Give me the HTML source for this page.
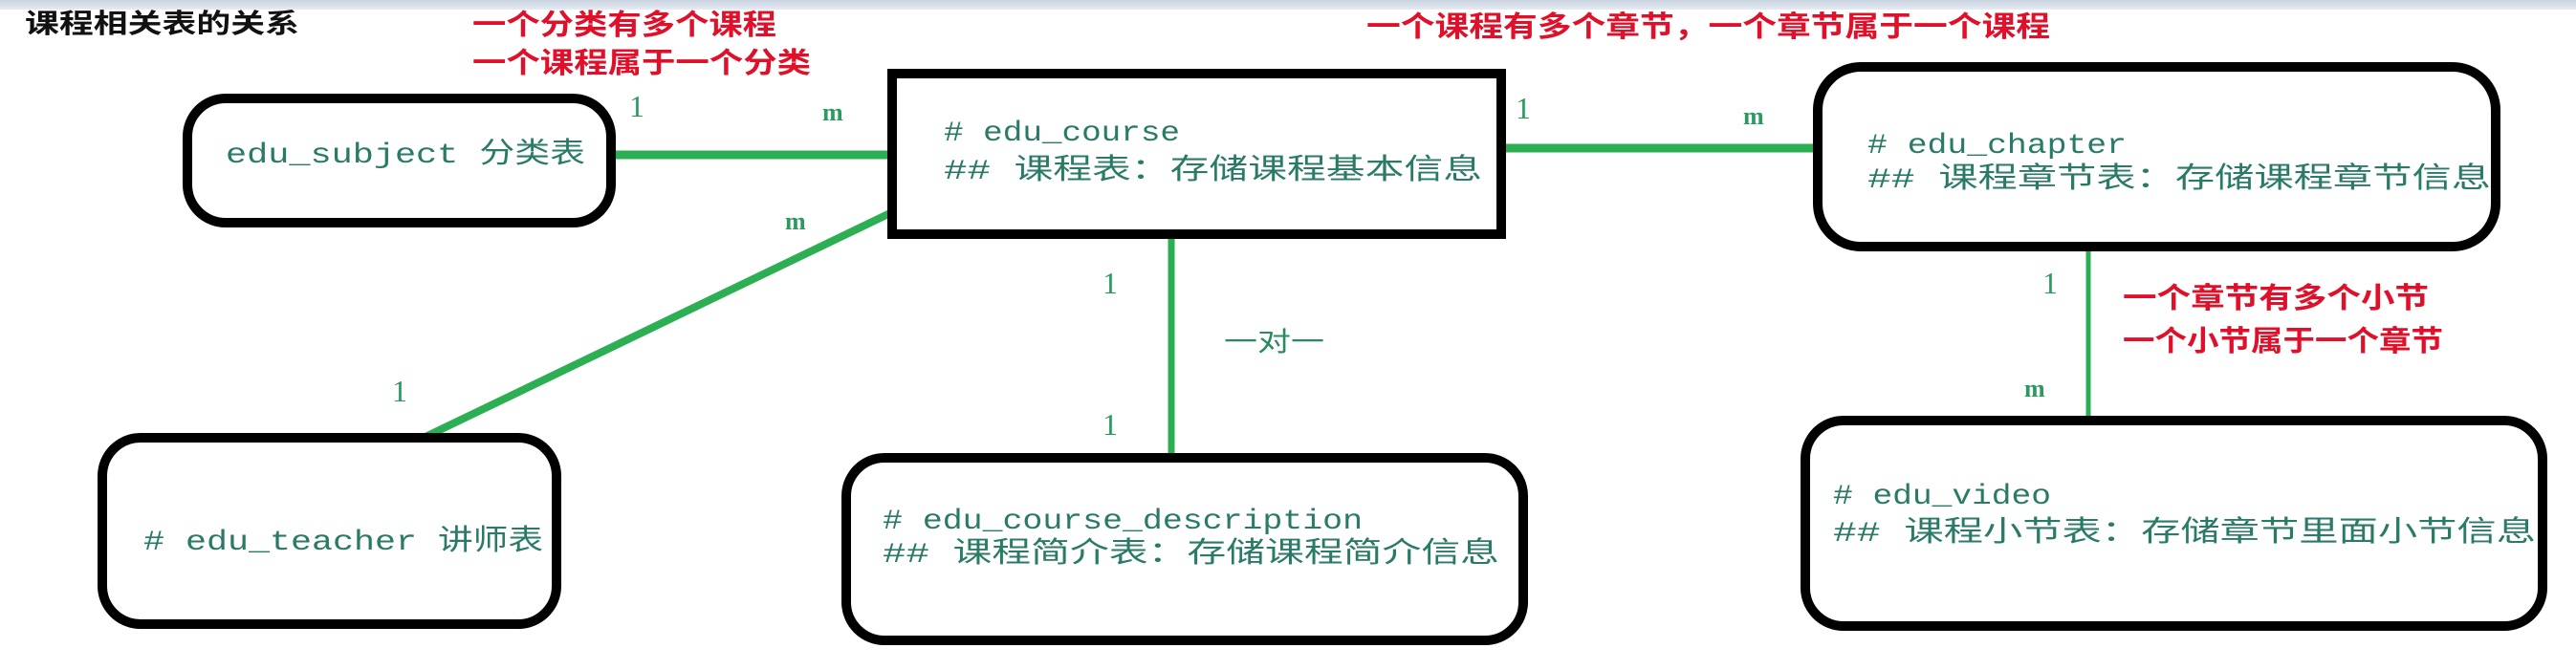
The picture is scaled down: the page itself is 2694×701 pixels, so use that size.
<!DOCTYPE html>
<html><head><meta charset="utf-8"><style>
html,body{margin:0;padding:0;background:#fff;width:2694px;height:701px;overflow:hidden}
svg{display:block}
.t{font-family:"Liberation Mono","Noto Sans CJK SC",monospace;fill:#2a7a68;font-size:30px}
.r{font-family:"Liberation Sans","Noto Sans CJK SC",sans-serif;fill:#e0102a;font-size:30px;font-weight:bold}
.n{font-family:"Liberation Serif",serif;fill:#2a9a5e;font-size:32px}
.m{font-family:"Liberation Serif",serif;fill:#2a9a5e;font-size:26px;font-weight:bold}
</style></head><body>
<svg width="2694" height="701" viewBox="0 0 2694 701" xmlns="http://www.w3.org/2000/svg">
<defs><linearGradient id="g" x1="0" y1="0" x2="0" y2="1"><stop offset="0" stop-color="#c9d3e0"/><stop offset="1" stop-color="#e6ebf2"/></linearGradient></defs>
<rect x="0" y="0" width="2694" height="10" fill="url(#g)"/>
<text x="26" y="34" font-family="Liberation Sans,Noto Sans CJK SC,sans-serif" font-weight="bold" font-size="28" fill="#111" textLength="287" lengthAdjust="spacingAndGlyphs">课程相关表的关系</text>
<text class="r" x="494" y="36" textLength="318" lengthAdjust="spacingAndGlyphs">一个分类有多个课程</text>
<text class="r" x="494" y="76" textLength="354" lengthAdjust="spacingAndGlyphs">一个课程属于一个分类</text>
<text class="r" x="1429" y="38" textLength="715" lengthAdjust="spacingAndGlyphs">一个课程有多个章节，一个章节属于一个课程</text>
<text class="r" x="2220" y="322" textLength="320" lengthAdjust="spacingAndGlyphs">一个章节有多个小节</text>
<text class="r" x="2220" y="367" textLength="335" lengthAdjust="spacingAndGlyphs">一个小节属于一个章节</text>

<g stroke="#2cae52" stroke-linecap="round" fill="none">
<line x1="644" y1="162" x2="933" y2="162" stroke-width="9"/>
<line x1="1575" y1="155" x2="1896" y2="155" stroke-width="9"/>
<line x1="1225" y1="250" x2="1225" y2="476" stroke-width="7"/>
<line x1="2184" y1="262" x2="2184" y2="438" stroke-width="5"/>
<line x1="933" y1="222" x2="445" y2="457" stroke-width="8"/>
</g>

<g fill="none" stroke="#000" stroke-width="10">
<rect x="196" y="103" width="443" height="130" rx="40"/>
<rect x="933" y="77" width="637" height="168"/>
<rect x="1901" y="70" width="709" height="188" rx="45"/>
<rect x="885" y="479" width="708" height="191" rx="40"/>
<rect x="107" y="458" width="475" height="195" rx="40"/>
<rect x="1888" y="440" width="771" height="215" rx="40"/>
</g>

<text class="t" x="236" y="170" textLength="376" lengthAdjust="spacingAndGlyphs">edu_subject 分类表</text>
<text class="t" x="987" y="147" textLength="247" lengthAdjust="spacingAndGlyphs"># edu_course</text>
<text class="t" x="987" y="187" textLength="563" lengthAdjust="spacingAndGlyphs">## 课程表：存储课程基本信息</text>
<text class="t" x="1953" y="160" textLength="271" lengthAdjust="spacingAndGlyphs"># edu_chapter</text>
<text class="t" x="1953" y="196" textLength="652" lengthAdjust="spacingAndGlyphs">## 课程章节表：存储课程章节信息</text>
<text class="t" x="923" y="553" textLength="502" lengthAdjust="spacingAndGlyphs"># edu_course_description</text>
<text class="t" x="923" y="588" textLength="645" lengthAdjust="spacingAndGlyphs">## 课程简介表：存储课程简介信息</text>
<text class="t" x="150" y="575" textLength="418" lengthAdjust="spacingAndGlyphs"># edu_teacher 讲师表</text>
<text class="t" x="1917" y="527" textLength="228" lengthAdjust="spacingAndGlyphs"># edu_video</text>
<text class="t" x="1917" y="566" textLength="735" lengthAdjust="spacingAndGlyphs">## 课程小节表：存储章节里面小节信息</text>
<text x="1280" y="367" font-family="Liberation Sans,Noto Sans CJK SC,sans-serif" font-size="28" fill="#2a8a60" textLength="105" lengthAdjust="spacingAndGlyphs">一对一</text>

<text class="n" x="658" y="122">1</text>
<text class="m" x="860" y="126">m</text>
<text class="m" x="821" y="240">m</text>
<text class="n" x="410" y="420">1</text>
<text class="n" x="1585" y="124">1</text>
<text class="m" x="1823" y="130">m</text>
<text class="n" x="1153" y="307">1</text>
<text class="n" x="1153" y="455">1</text>
<text class="n" x="2136" y="307">1</text>
<text class="m" x="2117" y="415">m</text>
</svg>
</body></html>
